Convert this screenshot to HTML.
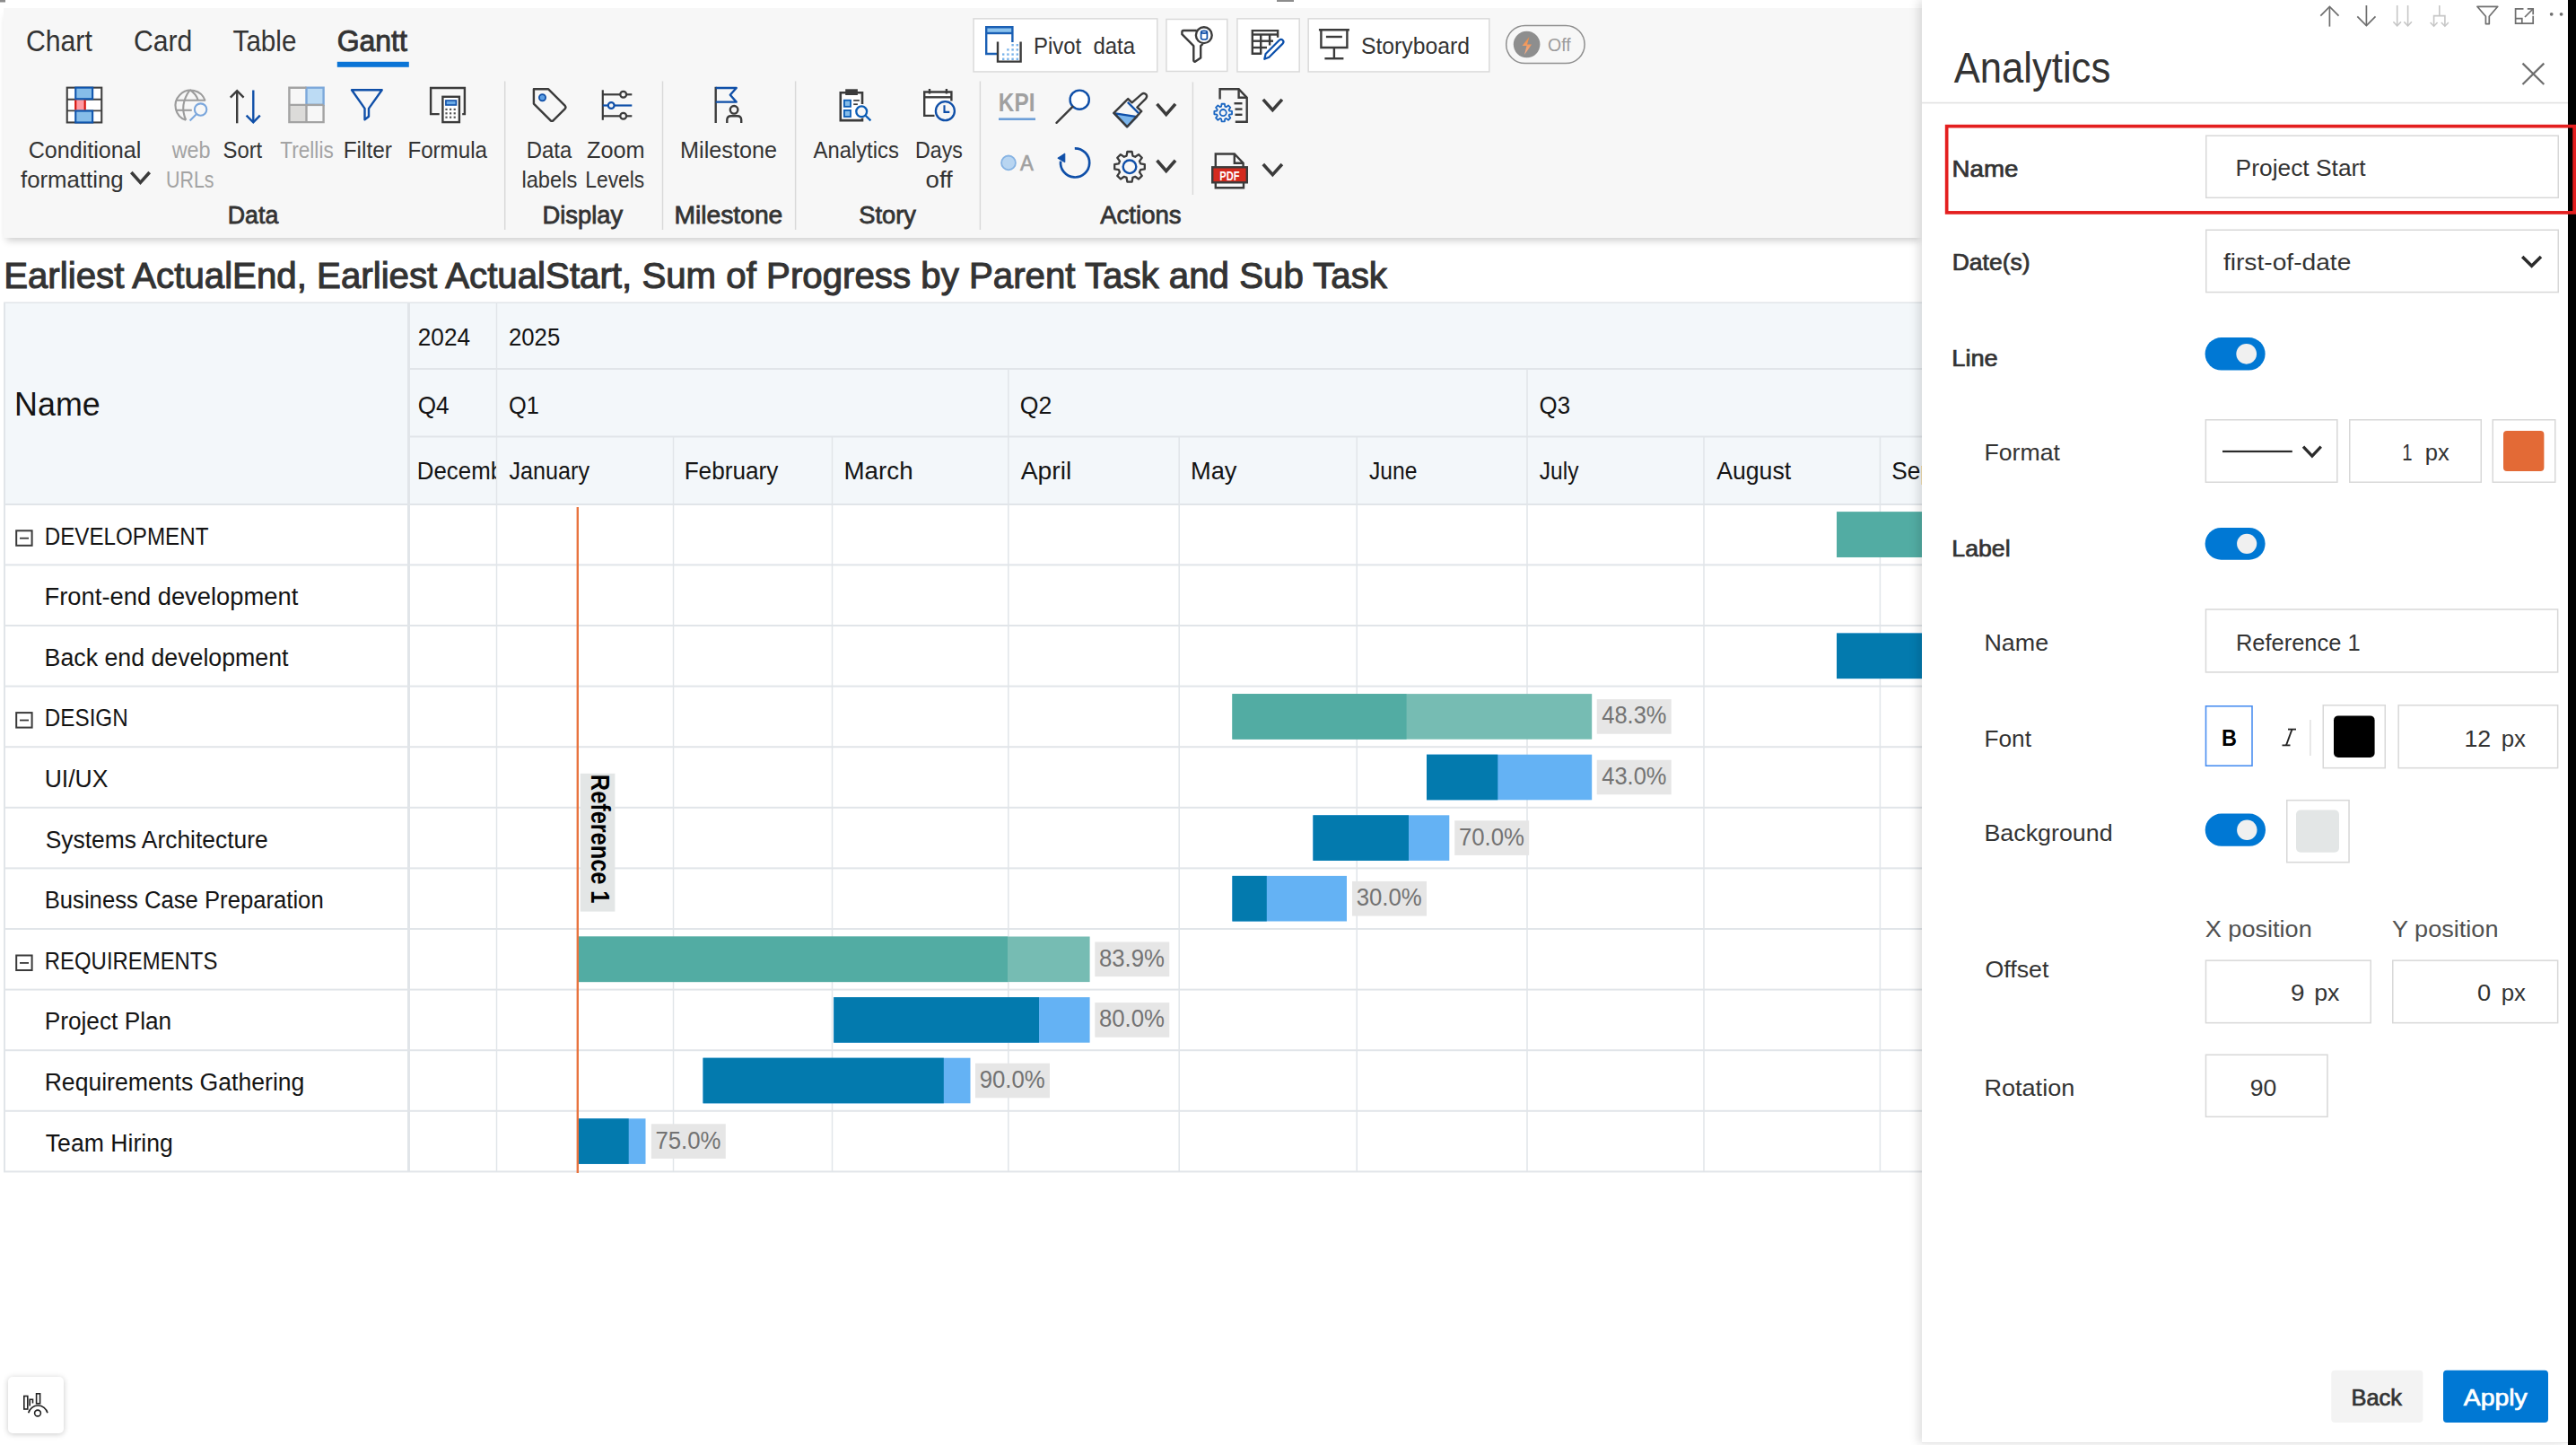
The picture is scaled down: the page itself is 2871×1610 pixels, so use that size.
<!DOCTYPE html>
<html><head><meta charset="utf-8"><title>Gantt Analytics</title>
<style>
html,body{margin:0;padding:0;background:#ffffff;width:2871px;height:1610px;overflow:hidden;font-family:"Liberation Sans",sans-serif;}
.abs{position:absolute;left:0;top:0;}
#ribbon{position:absolute;left:4px;top:9px;width:2138px;height:256px;background:#f7f7f7;box-shadow:0 6px 8px -3px rgba(0,0,0,0.2);}
#panel{position:absolute;left:2142px;top:0;width:720px;height:1607px;background:#ffffff;box-shadow:-4px 0 10px rgba(0,0,0,0.13);border-bottom:1px solid #e6e6e6;}
#strip{position:absolute;left:2862px;top:0;width:9px;height:1610px;background:#000;}
#blbtn{position:absolute;left:9px;top:1534px;width:62px;height:63px;background:#fff;border-radius:5px;box-shadow:0 1px 6px rgba(0,0,0,0.22);}
svg text{white-space:pre;}
</style></head>
<body>
<svg class="abs" width="2871" height="1610" viewBox="0 0 2871 1610">
<text x="4.14" y="320.80" font-family="Liberation Sans" font-size="40.6" font-weight="400" fill="#333333" stroke="#333333" stroke-width="1.1" textLength="1541.86" lengthAdjust="spacingAndGlyphs" xml:space="preserve">Earliest ActualEnd, Earliest ActualStart, Sum of Progress by Parent Task and Sub Task</text>
<rect x="4" y="337" width="2138" height="225" fill="#f3f7fa" />
<rect x="4" y="336.5" width="2138" height="1.5" fill="#e1e5e9" />
<rect x="4" y="337" width="2" height="968" fill="#e1e5e9" />
<rect x="454" y="337" width="3" height="968" fill="#e1e5e9" />
<rect x="457" y="410" width="1685" height="2" fill="#e1e5e9" />
<rect x="457" y="485.5" width="1685" height="2" fill="#e1e5e9" />
<rect x="4" y="561" width="2138" height="2" fill="#e1e5e9" />
<rect x="552.75" y="337" width="1.5" height="74" fill="#e1e5e9" />
<rect x="552.75" y="411" width="1.5" height="75" fill="#e1e5e9" />
<rect x="1123.05" y="411" width="1.5" height="75" fill="#e1e5e9" />
<rect x="1701.25" y="411" width="1.5" height="75" fill="#e1e5e9" />
<rect x="552.75" y="486" width="1.5" height="75" fill="#e1e5e9" />
<rect x="749.75" y="486" width="1.5" height="75" fill="#e1e5e9" />
<rect x="926.75" y="486" width="1.5" height="75" fill="#e1e5e9" />
<rect x="1123.05" y="486" width="1.5" height="75" fill="#e1e5e9" />
<rect x="1313.45" y="486" width="1.5" height="75" fill="#e1e5e9" />
<rect x="1511.45" y="486" width="1.5" height="75" fill="#e1e5e9" />
<rect x="1701.25" y="486" width="1.5" height="75" fill="#e1e5e9" />
<rect x="1898.25" y="486" width="1.5" height="75" fill="#e1e5e9" />
<rect x="2094.65" y="486" width="1.5" height="75" fill="#e1e5e9" />
<rect x="552.75" y="563" width="1.5" height="742" fill="#e1e5e9" />
<rect x="749.75" y="563" width="1.5" height="742" fill="#e1e5e9" />
<rect x="926.75" y="563" width="1.5" height="742" fill="#e1e5e9" />
<rect x="1123.05" y="563" width="1.5" height="742" fill="#e1e5e9" />
<rect x="1313.45" y="563" width="1.5" height="742" fill="#e1e5e9" />
<rect x="1511.45" y="563" width="1.5" height="742" fill="#e1e5e9" />
<rect x="1701.25" y="563" width="1.5" height="742" fill="#e1e5e9" />
<rect x="1898.25" y="563" width="1.5" height="742" fill="#e1e5e9" />
<rect x="2094.65" y="563" width="1.5" height="742" fill="#e1e5e9" />
<rect x="4" y="628.4" width="2138" height="2" fill="#e1e5e9" />
<rect x="4" y="696.0" width="2138" height="2" fill="#e1e5e9" />
<rect x="4" y="763.5999999999999" width="2138" height="2" fill="#e1e5e9" />
<rect x="4" y="831.1999999999999" width="2138" height="2" fill="#e1e5e9" />
<rect x="4" y="898.8" width="2138" height="2" fill="#e1e5e9" />
<rect x="4" y="966.3999999999999" width="2138" height="2" fill="#e1e5e9" />
<rect x="4" y="1034.0" width="2138" height="2" fill="#e1e5e9" />
<rect x="4" y="1101.6" width="2138" height="2" fill="#e1e5e9" />
<rect x="4" y="1169.1999999999998" width="2138" height="2" fill="#e1e5e9" />
<rect x="4" y="1236.8" width="2138" height="2" fill="#e1e5e9" />
<rect x="4" y="1304.3999999999999" width="2138" height="2" fill="#e1e5e9" />
<text x="16.09" y="462.90" font-family="Liberation Sans" font-size="37" font-weight="400" fill="#141414" textLength="95.64" lengthAdjust="spacingAndGlyphs" xml:space="preserve">Name</text>
<text x="465.76" y="385.00" font-family="Liberation Sans" font-size="28" font-weight="400" fill="#141414" textLength="58.27" lengthAdjust="spacingAndGlyphs" xml:space="preserve">2024</text>
<text x="566.98" y="385.00" font-family="Liberation Sans" font-size="28" font-weight="400" fill="#141414" textLength="57.24" lengthAdjust="spacingAndGlyphs" xml:space="preserve">2025</text>
<text x="465.77" y="460.80" font-family="Liberation Sans" font-size="28" font-weight="400" fill="#141414" textLength="34.87" lengthAdjust="spacingAndGlyphs" xml:space="preserve">Q4</text>
<text x="566.99" y="460.80" font-family="Liberation Sans" font-size="28" font-weight="400" fill="#141414" textLength="33.82" lengthAdjust="spacingAndGlyphs" xml:space="preserve">Q1</text>
<text x="1136.85" y="460.80" font-family="Liberation Sans" font-size="28" font-weight="400" fill="#141414" textLength="35.49" lengthAdjust="spacingAndGlyphs" xml:space="preserve">Q2</text>
<text x="1715.58" y="460.80" font-family="Liberation Sans" font-size="28" font-weight="400" fill="#141414" textLength="34.45" lengthAdjust="spacingAndGlyphs" xml:space="preserve">Q3</text>
<clipPath id="decclip"><rect x="457" y="486" width="96" height="75"/></clipPath>
<clipPath id="sepclip"><rect x="2096" y="486" width="46" height="75"/></clipPath>
<text x="567.50" y="534.30" font-family="Liberation Sans" font-size="28" font-weight="400" fill="#141414" textLength="89.50" lengthAdjust="spacingAndGlyphs" xml:space="preserve">January</text>
<text x="762.63" y="534.30" font-family="Liberation Sans" font-size="28" font-weight="400" fill="#141414" textLength="104.77" lengthAdjust="spacingAndGlyphs" xml:space="preserve">February</text>
<text x="940.52" y="534.30" font-family="Liberation Sans" font-size="28" font-weight="400" fill="#141414" textLength="77.04" lengthAdjust="spacingAndGlyphs" xml:space="preserve">March</text>
<text x="1137.80" y="534.30" font-family="Liberation Sans" font-size="28" font-weight="400" fill="#141414" textLength="56.43" lengthAdjust="spacingAndGlyphs" xml:space="preserve">April</text>
<text x="1327.05" y="534.30" font-family="Liberation Sans" font-size="28" font-weight="400" fill="#141414" textLength="51.45" lengthAdjust="spacingAndGlyphs" xml:space="preserve">May</text>
<text x="1526.00" y="534.30" font-family="Liberation Sans" font-size="28" font-weight="400" fill="#141414" textLength="53.40" lengthAdjust="spacingAndGlyphs" xml:space="preserve">June</text>
<text x="1715.80" y="534.30" font-family="Liberation Sans" font-size="28" font-weight="400" fill="#141414" textLength="43.60" lengthAdjust="spacingAndGlyphs" xml:space="preserve">July</text>
<text x="1913.20" y="534.30" font-family="Liberation Sans" font-size="28" font-weight="400" fill="#141414" textLength="82.99" lengthAdjust="spacingAndGlyphs" xml:space="preserve">August</text>
<g clip-path="url(#decclip)">
<text x="464.86" y="534.30" font-family="Liberation Sans" font-size="28" font-weight="400" fill="#141414" textLength="119.14" lengthAdjust="spacingAndGlyphs" xml:space="preserve">December</text>
</g>
<g clip-path="url(#sepclip)">
<text x="2108.26" y="534.30" font-family="Liberation Sans" font-size="28" font-weight="400" fill="#141414" textLength="128.24" lengthAdjust="spacingAndGlyphs" xml:space="preserve">September</text>
</g>
<text x="49.81" y="606.60" font-family="Liberation Sans" font-size="27" font-weight="400" fill="#141414" textLength="182.63" lengthAdjust="spacingAndGlyphs" xml:space="preserve">DEVELOPMENT</text>
<rect x="18.2" y="591.30" width="17.4" height="16.5" fill="none" stroke="#3a3a3a" stroke-width="2"/><rect x="22" y="598.80" width="10" height="1.8" fill="#3a3a3a"/>
<text x="49.57" y="674.20" font-family="Liberation Sans" font-size="27" font-weight="400" fill="#141414" textLength="282.72" lengthAdjust="spacingAndGlyphs" xml:space="preserve">Front-end development</text>
<text x="49.62" y="741.80" font-family="Liberation Sans" font-size="27" font-weight="400" fill="#141414" textLength="271.89" lengthAdjust="spacingAndGlyphs" xml:space="preserve">Back end development</text>
<text x="49.80" y="809.40" font-family="Liberation Sans" font-size="27" font-weight="400" fill="#141414" textLength="92.94" lengthAdjust="spacingAndGlyphs" xml:space="preserve">DESIGN</text>
<rect x="18.2" y="794.10" width="17.4" height="16.5" fill="none" stroke="#3a3a3a" stroke-width="2"/><rect x="22" y="801.60" width="10" height="1.8" fill="#3a3a3a"/>
<text x="49.63" y="877.00" font-family="Liberation Sans" font-size="27" font-weight="400" fill="#141414" textLength="70.77" lengthAdjust="spacingAndGlyphs" xml:space="preserve">UI/UX</text>
<text x="50.63" y="944.60" font-family="Liberation Sans" font-size="27" font-weight="400" fill="#141414" textLength="248.06" lengthAdjust="spacingAndGlyphs" xml:space="preserve">Systems Architecture</text>
<text x="49.70" y="1012.20" font-family="Liberation Sans" font-size="27" font-weight="400" fill="#141414" textLength="310.97" lengthAdjust="spacingAndGlyphs" xml:space="preserve">Business Case Preparation</text>
<text x="49.83" y="1079.80" font-family="Liberation Sans" font-size="27" font-weight="400" fill="#141414" textLength="192.56" lengthAdjust="spacingAndGlyphs" xml:space="preserve">REQUIREMENTS</text>
<rect x="18.2" y="1064.50" width="17.4" height="16.5" fill="none" stroke="#3a3a3a" stroke-width="2"/><rect x="22" y="1072.00" width="10" height="1.8" fill="#3a3a3a"/>
<text x="49.66" y="1147.40" font-family="Liberation Sans" font-size="27" font-weight="400" fill="#141414" textLength="141.53" lengthAdjust="spacingAndGlyphs" xml:space="preserve">Project Plan</text>
<text x="49.63" y="1215.00" font-family="Liberation Sans" font-size="27" font-weight="400" fill="#141414" textLength="289.77" lengthAdjust="spacingAndGlyphs" xml:space="preserve">Requirements Gathering</text>
<text x="50.80" y="1282.60" font-family="Liberation Sans" font-size="27" font-weight="400" fill="#141414" textLength="142.00" lengthAdjust="spacingAndGlyphs" xml:space="preserve">Team Hiring</text>
<rect x="2047.00" y="570.30" width="95.00" height="50.6" fill="#76bcb3" />
<rect x="2047.00" y="570.30" width="95.00" height="50.6" fill="#52aca3" />
<rect x="2047.00" y="705.50" width="95.00" height="50.6" fill="#64b2f4" />
<rect x="2047.00" y="705.50" width="95.00" height="50.6" fill="#037aae" />
<rect x="1373.40" y="773.10" width="400.80" height="50.6" fill="#76bcb3" />
<rect x="1373.40" y="773.10" width="194.20" height="50.6" fill="#52aca3" />
<rect x="1779.70" y="779.10" width="83" height="38.6" fill="#e6e6e6" />
<text x="1785.30" y="806.40" font-family="Liberation Sans" font-size="28" font-weight="400" fill="#737373" textLength="72.11" lengthAdjust="spacingAndGlyphs" xml:space="preserve">48.3%</text>
<rect x="1590.00" y="840.70" width="184.20" height="50.6" fill="#64b2f4" />
<rect x="1590.00" y="840.70" width="79.30" height="50.6" fill="#037aae" />
<rect x="1779.70" y="846.70" width="83" height="38.6" fill="#e6e6e6" />
<text x="1785.30" y="874.00" font-family="Liberation Sans" font-size="28" font-weight="400" fill="#737373" textLength="72.11" lengthAdjust="spacingAndGlyphs" xml:space="preserve">43.0%</text>
<rect x="1463.40" y="908.30" width="151.90" height="50.6" fill="#64b2f4" />
<rect x="1463.40" y="908.30" width="106.60" height="50.6" fill="#037aae" />
<rect x="1621.20" y="914.30" width="83" height="38.6" fill="#e6e6e6" />
<text x="1625.88" y="941.60" font-family="Liberation Sans" font-size="28" font-weight="400" fill="#737373" textLength="73.04" lengthAdjust="spacingAndGlyphs" xml:space="preserve">70.0%</text>
<rect x="1373.40" y="975.90" width="127.60" height="50.6" fill="#64b2f4" />
<rect x="1373.40" y="975.90" width="38.40" height="50.6" fill="#037aae" />
<rect x="1507.00" y="981.90" width="83" height="38.6" fill="#e6e6e6" />
<text x="1511.68" y="1009.20" font-family="Liberation Sans" font-size="28" font-weight="400" fill="#737373" textLength="73.04" lengthAdjust="spacingAndGlyphs" xml:space="preserve">30.0%</text>
<rect x="643.40" y="1043.50" width="571.20" height="50.6" fill="#76bcb3" />
<rect x="643.40" y="1043.50" width="479.60" height="50.6" fill="#52aca3" />
<rect x="1220.30" y="1049.50" width="83" height="38.6" fill="#e6e6e6" />
<text x="1224.98" y="1076.80" font-family="Liberation Sans" font-size="28" font-weight="400" fill="#737373" textLength="73.04" lengthAdjust="spacingAndGlyphs" xml:space="preserve">83.9%</text>
<rect x="929.20" y="1111.10" width="285.40" height="50.6" fill="#64b2f4" />
<rect x="929.20" y="1111.10" width="228.80" height="50.6" fill="#037aae" />
<rect x="1220.30" y="1117.10" width="83" height="38.6" fill="#e6e6e6" />
<text x="1224.98" y="1144.40" font-family="Liberation Sans" font-size="28" font-weight="400" fill="#737373" textLength="73.04" lengthAdjust="spacingAndGlyphs" xml:space="preserve">80.0%</text>
<rect x="783.50" y="1178.70" width="298.00" height="50.6" fill="#64b2f4" />
<rect x="783.50" y="1178.70" width="268.30" height="50.6" fill="#037aae" />
<rect x="1087.00" y="1184.70" width="83" height="38.6" fill="#e6e6e6" />
<text x="1091.68" y="1212.00" font-family="Liberation Sans" font-size="28" font-weight="400" fill="#737373" textLength="73.04" lengthAdjust="spacingAndGlyphs" xml:space="preserve">90.0%</text>
<rect x="643.40" y="1246.30" width="76.10" height="50.6" fill="#64b2f4" />
<rect x="643.40" y="1246.30" width="57.30" height="50.6" fill="#037aae" />
<rect x="725.80" y="1252.30" width="83" height="38.6" fill="#e6e6e6" />
<text x="730.48" y="1279.60" font-family="Liberation Sans" font-size="28" font-weight="400" fill="#737373" textLength="73.04" lengthAdjust="spacingAndGlyphs" xml:space="preserve">75.0%</text>
<rect x="642.6" y="565" width="2.4" height="742" fill="#e8743f" />
<rect x="646.8" y="861.8" width="38.6" height="153.8" fill="#e3e6e6" />
<text transform="translate(658.60,863.70) rotate(90)" x="-0.87" y="0" font-family="Liberation Sans" font-size="29" font-weight="700" fill="#000" textLength="143.59" lengthAdjust="spacingAndGlyphs" xml:space="preserve">Reference 1</text>
</svg>
<div id="blbtn"></div>
<svg class="abs" width="2871" height="1610" viewBox="0 0 2871 1610">
<svg x="26" y="1552" width="28" height="27" viewBox="0 0 28 27" overflow="visible"><g fill="none" stroke="#222" stroke-width="1.6"><rect x="0.8" y="3.5" width="4" height="14.5"/><path d="M7.2 14.5 V7.3 H10.5 V11.5"/><rect x="14.6" y="0.8" width="4" height="11"/><path d="M5.7 22.3 A11 11 0 0 1 27 22.3"/><circle cx="16" cy="22.5" r="3.4"/></g></svg>
</svg>
<div id="ribbon"></div>
<svg class="abs" width="2871" height="1610" viewBox="0 0 2871 1610">
<rect x="0" y="0" width="6" height="2.5" fill="#8c8c8c" />
<rect x="1423" y="0" width="19" height="2" fill="#8c8c8c" />
<text x="29.01" y="57.20" font-family="Liberation Sans" font-size="34" font-weight="400" fill="#333333" textLength="73.80" lengthAdjust="spacingAndGlyphs" xml:space="preserve">Chart</text>
<text x="148.91" y="57.20" font-family="Liberation Sans" font-size="34" font-weight="400" fill="#333333" textLength="65.28" lengthAdjust="spacingAndGlyphs" xml:space="preserve">Card</text>
<text x="259.60" y="57.20" font-family="Liberation Sans" font-size="34" font-weight="400" fill="#333333" textLength="70.79" lengthAdjust="spacingAndGlyphs" xml:space="preserve">Table</text>
<text x="375.66" y="57.20" font-family="Liberation Sans" font-size="34" font-weight="400" fill="#333333" stroke="#333333" stroke-width="0.95" textLength="78.22" lengthAdjust="spacingAndGlyphs" xml:space="preserve">Gantt</text>
<rect x="375.8" y="68.8" width="80" height="6" fill="#0a74d6" />
<text x="31.65" y="176.10" font-family="Liberation Sans" font-size="26.5" font-weight="400" fill="#333333" textLength="125.69" lengthAdjust="spacingAndGlyphs" xml:space="preserve">Conditional</text>
<text x="23.00" y="208.60" font-family="Liberation Sans" font-size="26.5" font-weight="400" fill="#333333" textLength="114.72" lengthAdjust="spacingAndGlyphs" xml:space="preserve">formatting</text>
<text x="191.68" y="176.10" font-family="Liberation Sans" font-size="26.5" font-weight="400" fill="#a3a3a3" textLength="42.97" lengthAdjust="spacingAndGlyphs" xml:space="preserve">web</text>
<text x="184.98" y="208.60" font-family="Liberation Sans" font-size="26.5" font-weight="400" fill="#a3a3a3" textLength="53.52" lengthAdjust="spacingAndGlyphs" xml:space="preserve">URLs</text>
<text x="248.50" y="176.10" font-family="Liberation Sans" font-size="26.5" font-weight="400" fill="#333333" textLength="43.73" lengthAdjust="spacingAndGlyphs" xml:space="preserve">Sort</text>
<text x="312.30" y="176.10" font-family="Liberation Sans" font-size="26.5" font-weight="400" fill="#a3a3a3" textLength="59.41" lengthAdjust="spacingAndGlyphs" xml:space="preserve">Trellis</text>
<text x="382.66" y="176.10" font-family="Liberation Sans" font-size="26.5" font-weight="400" fill="#333333" textLength="54.18" lengthAdjust="spacingAndGlyphs" xml:space="preserve">Filter</text>
<text x="454.38" y="176.10" font-family="Liberation Sans" font-size="26.5" font-weight="400" fill="#333333" textLength="88.58" lengthAdjust="spacingAndGlyphs" xml:space="preserve">Formula</text>
<text x="586.80" y="176.10" font-family="Liberation Sans" font-size="26.5" font-weight="400" fill="#333333" textLength="50.47" lengthAdjust="spacingAndGlyphs" xml:space="preserve">Data</text>
<text x="581.41" y="208.60" font-family="Liberation Sans" font-size="26.5" font-weight="400" fill="#333333" textLength="61.82" lengthAdjust="spacingAndGlyphs" xml:space="preserve">labels</text>
<text x="654.00" y="176.10" font-family="Liberation Sans" font-size="26.5" font-weight="400" fill="#333333" textLength="64.63" lengthAdjust="spacingAndGlyphs" xml:space="preserve">Zoom</text>
<text x="652.28" y="208.60" font-family="Liberation Sans" font-size="26.5" font-weight="400" fill="#333333" textLength="65.94" lengthAdjust="spacingAndGlyphs" xml:space="preserve">Levels</text>
<text x="758.10" y="176.10" font-family="Liberation Sans" font-size="26.5" font-weight="400" fill="#333333" textLength="107.91" lengthAdjust="spacingAndGlyphs" xml:space="preserve">Milestone</text>
<text x="906.60" y="176.10" font-family="Liberation Sans" font-size="26.5" font-weight="400" fill="#333333" textLength="95.22" lengthAdjust="spacingAndGlyphs" xml:space="preserve">Analytics</text>
<text x="1020.05" y="176.10" font-family="Liberation Sans" font-size="26.5" font-weight="400" fill="#333333" textLength="52.77" lengthAdjust="spacingAndGlyphs" xml:space="preserve">Days</text>
<text x="1031.56" y="208.60" font-family="Liberation Sans" font-size="26.5" font-weight="400" fill="#333333" textLength="30.18" lengthAdjust="spacingAndGlyphs" xml:space="preserve">off</text>
<text x="253.75" y="248.70" font-family="Liberation Sans" font-size="27.5" font-weight="400" fill="#333333" stroke="#333333" stroke-width="0.77" textLength="56.56" lengthAdjust="spacingAndGlyphs" xml:space="preserve">Data</text>
<text x="604.51" y="248.70" font-family="Liberation Sans" font-size="27.5" font-weight="400" fill="#333333" stroke="#333333" stroke-width="0.77" textLength="89.74" lengthAdjust="spacingAndGlyphs" xml:space="preserve">Display</text>
<text x="751.45" y="248.70" font-family="Liberation Sans" font-size="27.5" font-weight="400" fill="#333333" stroke="#333333" stroke-width="0.77" textLength="120.86" lengthAdjust="spacingAndGlyphs" xml:space="preserve">Milestone</text>
<text x="957.31" y="248.70" font-family="Liberation Sans" font-size="27.5" font-weight="400" fill="#333333" stroke="#333333" stroke-width="0.77" textLength="63.54" lengthAdjust="spacingAndGlyphs" xml:space="preserve">Story</text>
<text x="1226.20" y="248.70" font-family="Liberation Sans" font-size="27.5" font-weight="400" fill="#333333" stroke="#333333" stroke-width="0.77" textLength="90.45" lengthAdjust="spacingAndGlyphs" xml:space="preserve">Actions</text>
<rect x="561.95" y="90.5" width="1.5" height="165.5" fill="#d9d9d9" />
<rect x="737.75" y="90.5" width="1.5" height="165.5" fill="#d9d9d9" />
<rect x="885.85" y="90.5" width="1.5" height="165.5" fill="#d9d9d9" />
<rect x="1091.65" y="90.5" width="1.5" height="165.5" fill="#d9d9d9" />
<rect x="1328.65" y="91.5" width="1.5" height="125.5" fill="#d9d9d9" />
<rect x="74.75" y="97.65" width="38.5" height="38.8" fill="#ffffff" stroke="#404040" stroke-width="2.1"/><line x1="74.75" y1="110.8" x2="113.25" y2="110.8" stroke="#404040" stroke-width="1.9"/><line x1="74.75" y1="123.4" x2="113.25" y2="123.4" stroke="#404040" stroke-width="1.9"/><rect x="83.2" y="111.3" width="12.5" height="11.2" fill="#ff9aa2"/><line x1="84.25" y1="111.3" x2="84.25" y2="122.5" stroke="#d4140c" stroke-width="2.1"/><line x1="94.65" y1="111.3" x2="94.65" y2="122.5" stroke="#d4140c" stroke-width="2.1"/><rect x="84.25" y="97.65" width="18.9" height="12.6" fill="#86bde9" stroke="#0f55ad" stroke-width="2.1"/><rect x="84.25" y="123.55" width="18.9" height="12.9" fill="#86bde9" stroke="#0f55ad" stroke-width="2.1"/>
<polyline points="146.30,192.00 156.50,203.40 166.70,192.00" fill="none" stroke="#3b3b3b" stroke-width="3.6" stroke-linejoin="miter"/>
<g fill="none" stroke="#9c9c9c" stroke-width="2.1"><path d="M207.2 133.8 A17 17 0 1 1 228.6 112.2"/><path d="M211.7 100.2 Q199.5 117 207.2 133.8"/><path d="M211.7 100.2 Q218.8 105 220.6 111.5"/><line x1="196.6" y1="111.7" x2="229" y2="111.7"/><line x1="196.6" y1="122.8" x2="213.8" y2="122.8"/></g><g fill="none" stroke="#7aa6dc" stroke-width="2.1"><circle cx="223.6" cy="122.1" r="6.7"/><line x1="218.6" y1="127.4" x2="211.6" y2="134.4"/></g>
<svg x="256" y="100" width="34.4" height="37.3" viewBox="0 0 34.4 37.3" overflow="visible"><g fill="none" stroke="#3b3b3b" stroke-width="2.4"><line x1="8.2" y1="1" x2="8.2" y2="37.3"/><polyline points="0.8,8.6 8.2,1.2 15.6,8.6"/></g><g fill="none" stroke="#0f4fa8" stroke-width="2.4"><line x1="26.3" y1="0.5" x2="26.3" y2="36"/><polyline points="18.6,28.6 26.3,36.3 33.8,28.6"/></g></svg>
<svg x="321.2" y="96.5" width="40.6" height="40.8" viewBox="0 0 40.6 40.8" overflow="visible"><rect x="1.2" y="20.4" width="19" height="19.2" fill="#dcdbd9"/><rect x="20.3" y="1.2" width="19.1" height="19.2" fill="#bcdbf4" stroke="#7ca8da" stroke-width="2.4"/><g fill="none" stroke="#a3a3a3" stroke-width="2.4"><path d="M20.3 1.2 H1.2 V39.6 H39.4 V20.4"/><line x1="1.2" y1="20.4" x2="39.4" y2="20.4"/><line x1="20.3" y1="20.4" x2="20.3" y2="39.6"/></g></svg>
<svg x="390.8" y="98.9" width="36.1" height="35.9" viewBox="0 0 36.1 35.9" overflow="visible"><path d="M1.2 1.4 H34.9 L20.2 22 V30.8 L15.7 34.3 V22 Z" fill="none" stroke="#0f4fa8" stroke-width="2.4" stroke-linejoin="round"/></svg>
<svg x="478.9" y="96.8" width="40.2" height="40.5" viewBox="0 0 40.2 40.5" overflow="visible"><g fill="none" stroke="#3b3b3b" stroke-width="2.4"><path d="M10.8 30.3 H1.2 V1.2 H39 V30.3 H36.3"/><rect x="14.5" y="11" width="18.5" height="28.3" fill="#ffffff"/></g><rect x="18" y="15.2" width="11.5" height="5" fill="#6aaae6" stroke="#0f4fa8" stroke-width="1.6"/><g fill="#555"><rect x="17.5" y="24.0" width="2.2" height="2.2"/><rect x="17.5" y="28.4" width="2.2" height="2.2"/><rect x="17.5" y="32.8" width="2.2" height="2.2"/><rect x="22.1" y="24.0" width="2.2" height="2.2"/><rect x="22.1" y="28.4" width="2.2" height="2.2"/><rect x="22.1" y="32.8" width="2.2" height="2.2"/><rect x="26.7" y="24.0" width="2.2" height="2.2"/><rect x="26.7" y="28.4" width="2.2" height="2.2"/><rect x="26.7" y="32.8" width="2.2" height="2.2"/></g></svg>
<svg x="593.5" y="97.9" width="38.5" height="38" viewBox="0 0 38.5 38" overflow="visible"><path d="M1.4 1.4 H17.7 L36.3 20 Q37.6 21.6 36.3 23.2 L23.2 36.3 Q21.6 37.6 20 36.3 L1.4 17.7 Z" fill="none" stroke="#3b3b3b" stroke-width="2.4" stroke-linejoin="round"/><circle cx="11" cy="10.9" r="3.6" fill="#5d9fe4" stroke="#0f4fa8" stroke-width="1.8"/></svg>
<svg x="670.7" y="100.3" width="33.6" height="33.5" viewBox="0 0 33.6 33.5" overflow="visible"><g fill="none" stroke="#3b3b3b" stroke-width="2.2"><line x1="1.1" y1="0" x2="1.1" y2="33.5"/><line x1="1.1" y1="5" x2="20.5" y2="5"/><line x1="27.5" y1="5" x2="33.6" y2="5"/><circle cx="24" cy="5" r="3.4"/><line x1="1.1" y1="29" x2="20.5" y2="29"/><line x1="27.5" y1="29" x2="33.6" y2="29"/><circle cx="24" cy="29" r="3.4"/></g><g fill="none" stroke="#0f4fa8" stroke-width="2.2"><line x1="1.1" y1="17.2" x2="7" y2="17.2"/><line x1="14" y1="17.2" x2="33.6" y2="17.2"/><circle cx="10.5" cy="17.2" r="3.4"/></g></svg>
<svg x="796.5" y="96.8" width="32.2" height="40.2" viewBox="0 0 32.2 40.2" overflow="visible"><line x1="1.2" y1="0" x2="1.2" y2="40.2" stroke="#3b3b3b" stroke-width="2.4"/><path d="M1.2 1.2 H24.2 L17.3 9 L24.2 16.8 H1.2" fill="none" stroke="#0f4fa8" stroke-width="2.4" stroke-linejoin="round"/><g fill="none" stroke="#3b3b3b" stroke-width="2.4"><circle cx="21.6" cy="25.5" r="4.3"/><path d="M13.8 40.2 V36.8 Q13.8 32.4 18.3 32.4 H25.2 Q29.7 32.4 29.7 36.8 V40.2"/></g></svg>
<rect x="936.8" y="103.2" width="24.2" height="30.9" fill="#ffffff"/><g fill="none" stroke="#3b3b3b" stroke-width="2.6"><path d="M943 103.2 H936.8 V134.1 H961 V131"/><path d="M955 103.2 H961 V116"/></g><rect x="942.2" y="99.3" width="13.7" height="6.7" fill="#3b3b3b"/><rect x="940.9" y="111.7" width="7.1" height="7.1" fill="#86bde9" stroke="#0a5cb5" stroke-width="1.8"/><rect x="940.9" y="122.9" width="7.1" height="7.1" fill="#86bde9" stroke="#0a5cb5" stroke-width="1.8"/><g stroke="#3b3b3b" stroke-width="1.7"><line x1="951.2" y1="111.9" x2="957.9" y2="111.9"/><line x1="951.2" y1="116.2" x2="955.9" y2="116.2"/></g><circle cx="960.2" cy="124.3" r="7.4" fill="#f7f7f7"/><g fill="none" stroke="#0a5cb5" stroke-width="2.3"><circle cx="960.2" cy="124.3" r="5.9"/><line x1="964.4" y1="128.5" x2="970.4" y2="134.4"/></g>
<rect x="1030.2" y="102.5" width="30.2" height="26.4" fill="#ffffff"/><g fill="none" stroke="#3b3b3b" stroke-width="2.4"><path d="M1041.5 128.9 H1030.2 V102.5 H1060.4 V112.4"/><line x1="1030.2" y1="108.3" x2="1060.4" y2="108.3"/><line x1="1036" y1="99" x2="1036" y2="104.5"/><line x1="1054.9" y1="99" x2="1054.9" y2="104.5"/></g><circle cx="1053.4" cy="123.7" r="12.2" fill="#f7f7f7"/><circle cx="1053.4" cy="123.7" r="10.5" fill="none" stroke="#0f4fa8" stroke-width="2.3"/><polyline points="1052.5,117.3 1052.5,124.9 1058.3,124.9" fill="none" stroke="#0f4fa8" stroke-width="2.1"/>
<text x="1112.86" y="123.90" font-family="Liberation Sans" font-size="29" font-weight="700" fill="#a0a0a0" textLength="40.52" lengthAdjust="spacingAndGlyphs" xml:space="preserve">KPI</text>
<rect x="1113" y="131.4" width="41" height="2.6" fill="#6d9fd8" />
<svg x="1176.3" y="99.3" width="39.1" height="38.7" viewBox="0 0 39.1 38.7" overflow="visible"><circle cx="26.9" cy="11.9" r="10.6" fill="#ffffff" stroke="#0f4fa8" stroke-width="2.4"/><line x1="19.2" y1="19.6" x2="1.2" y2="37.5" stroke="#3b3b3b" stroke-width="2.4" stroke-linecap="round"/></svg>
<svg x="1240.6" y="103.7" width="38" height="38.6" viewBox="0 0 38 38.6" overflow="visible"><path d="M0.8 22.4 L26.6 26.4 L15.6 37.6 Z" fill="#7ab4ea" stroke="#0f4fa8" stroke-width="2.2" stroke-linejoin="round"/><path d="M0.8 22.2 L16.6 6.4 L21 10.6 L31.6 1.4 Q34.4 -0.8 36.6 1.4 Q38.6 3.8 36.2 6.4 L26.8 15.8 L31.6 20.2 L15.6 37.6 Z" fill="none" stroke="#3b3b3b" stroke-width="2.4" stroke-linejoin="round"/><line x1="16.2" y1="10.2" x2="28.4" y2="22.4" stroke="#0f4fa8" stroke-width="2.2"/></svg>
<polyline points="1289.50,115.90 1299.75,127.60 1310.00,115.90" fill="none" stroke="#3b3b3b" stroke-width="3.6" stroke-linejoin="miter"/>
<svg x="1114.8" y="172.2" width="37" height="18.2" viewBox="0 0 37 18.2" overflow="visible"><circle cx="9.2" cy="9.2" r="7.9" fill="#b8d5f1" stroke="#86b3e3" stroke-width="1.8"/></svg>
<text x="1136.90" y="189.70" font-family="Liberation Sans" font-size="24" font-weight="400" fill="#a0a0a0" stroke="#a0a0a0" stroke-width="0.67" textLength="14.81" lengthAdjust="spacingAndGlyphs" xml:space="preserve">A</text>
<path d="M1197.8 165.3 A16.1 16.1 0 1 1 1182.1 179.6" fill="none" stroke="#0f4fa8" stroke-width="2.7"/><path d="M1178.8 176.2 L1186.8 171 L1186.8 180.8 Z" fill="#0f4fa8" stroke="#0f4fa8" stroke-width="1" stroke-linejoin="round"/>
<svg x="1241" y="167.8" width="36" height="36" viewBox="0 0 36 36" overflow="visible"><path d="M30.13,14.58 L34.80,15.39 L34.80,20.61 L30.13,21.42 L28.99,24.16 L31.72,28.04 L28.04,31.72 L24.16,28.99 L21.42,30.13 L20.61,34.80 L15.39,34.80 L14.58,30.13 L11.84,28.99 L7.96,31.72 L4.28,28.04 L7.01,24.16 L5.87,21.42 L1.20,20.61 L1.20,15.39 L5.87,14.58 L7.01,11.84 L4.28,7.96 L7.96,4.28 L11.84,7.01 L14.58,5.87 L15.39,1.20 L20.61,1.20 L21.42,5.87 L24.16,7.01 L28.04,4.28 L31.72,7.96 L28.99,11.84 Z" fill="none" stroke="#3b3b3b" stroke-width="2.3" stroke-linejoin="round"/><circle cx="18" cy="18" r="7.3" fill="none" stroke="#0f4fa8" stroke-width="2.4"/></svg>
<polyline points="1289.50,178.80 1299.75,190.50 1310.00,178.80" fill="none" stroke="#3b3b3b" stroke-width="3.6" stroke-linejoin="miter"/>
<svg x="1352" y="98" width="38.9" height="39" viewBox="0 0 38.9 39" overflow="visible"><g fill="none" stroke="#3b3b3b" stroke-width="2.4"><path d="M7.6 12.5 V1.2 H28.6 L37.7 10.8 V37.8 H24.8"/><path d="M28.6 1.2 V10.8 H37.7"/><line x1="23.5" y1="17.2" x2="32.5" y2="17.2"/><line x1="24.5" y1="23.6" x2="32.5" y2="23.6"/><line x1="24.5" y1="29.8" x2="32.5" y2="29.8"/></g><path d="M18.09,25.51 L21.06,25.96 L21.06,29.24 L18.09,29.69 L17.55,30.99 L19.34,33.41 L17.01,35.74 L14.59,33.95 L13.29,34.49 L12.84,37.46 L9.56,37.46 L9.11,34.49 L7.81,33.95 L5.39,35.74 L3.06,33.41 L4.85,30.99 L4.31,29.69 L1.34,29.24 L1.34,25.96 L4.31,25.51 L4.85,24.21 L3.06,21.79 L5.39,19.46 L7.81,21.25 L9.11,20.71 L9.56,17.74 L12.84,17.74 L13.29,20.71 L14.59,21.25 L17.01,19.46 L19.34,21.79 L17.55,24.21 Z" fill="#f7f7f7" stroke="#1a66c2" stroke-width="1.8" stroke-linejoin="round"/><circle cx="11.2" cy="27.6" r="3.6" fill="none" stroke="#1a66c2" stroke-width="1.8"/></svg>
<polyline points="1407.80,110.90 1418.35,122.60 1428.90,110.90" fill="none" stroke="#3b3b3b" stroke-width="3.6" stroke-linejoin="miter"/>
<svg x="1350" y="170.3" width="41" height="40.2" viewBox="0 0 41 40.2" overflow="visible"><g fill="none" stroke="#3b3b3b" stroke-width="2.4"><path d="M4.8 16 V1.2 H25.8 L35.6 11.4 V16"/><path d="M25.8 1.2 V11.4 H35.6"/><path d="M4.8 33 V39 H36 V33"/></g><rect x="1.2" y="16" width="38.6" height="17" fill="#d32a1e" stroke="#3b3b3b" stroke-width="2.4"/></svg>
<text x="1359.30" y="200.80" font-family="Liberation Sans" font-size="14" font-weight="700" fill="#ffffff" textLength="22.15" lengthAdjust="spacingAndGlyphs" xml:space="preserve">PDF</text>
<polyline points="1407.80,183.00 1418.35,194.60 1428.90,183.00" fill="none" stroke="#3b3b3b" stroke-width="3.6" stroke-linejoin="miter"/>
<rect x="1085.05" y="20.85" width="204.70" height="59.10" fill="#ffffff" stroke="#dadada" stroke-width="1.5"/>
<rect x="1299.95" y="21.45" width="67.80" height="58.00" fill="#ffffff" stroke="#dadada" stroke-width="1.5"/>
<rect x="1378.95" y="20.85" width="69.20" height="59.10" fill="#ffffff" stroke="#dadada" stroke-width="1.5"/>
<rect x="1458.15" y="20.85" width="201.70" height="59.10" fill="#ffffff" stroke="#dadada" stroke-width="1.5"/>
<svg x="1098" y="29" width="40.8" height="40.8" viewBox="0 0 40.8 40.8" overflow="visible"><rect x="1.2" y="1.2" width="29.2" height="6.8" fill="#8cc3ee"/><path d="M13.5 31 H1.2 V1.2 H30.4 V18" fill="none" stroke="#1a5fb4" stroke-width="2.4"/><line x1="1.2" y1="8" x2="30.4" y2="8" stroke="#1a5fb4" stroke-width="2.4"/><path d="M14 17.5 V39.6 H39.6 V17.5" fill="none" stroke="#3b3b3b" stroke-width="2.4"/><g fill="#79b3ea"><rect x="19.0" y="30.4" width="2.4" height="2.4"/><rect x="19.0" y="35.6" width="2.4" height="2.4"/><rect x="24.2" y="25.2" width="2.4" height="2.4"/><rect x="24.2" y="30.4" width="2.4" height="2.4"/><rect x="24.2" y="35.6" width="2.4" height="2.4"/><rect x="29.4" y="20.0" width="2.4" height="2.4"/><rect x="29.4" y="25.2" width="2.4" height="2.4"/><rect x="29.4" y="30.4" width="2.4" height="2.4"/><rect x="29.4" y="35.6" width="2.4" height="2.4"/><rect x="34.6" y="20.0" width="2.4" height="2.4"/><rect x="34.6" y="25.2" width="2.4" height="2.4"/><rect x="34.6" y="30.4" width="2.4" height="2.4"/><rect x="34.6" y="35.6" width="2.4" height="2.4"/></g></svg>
<text x="1152.10" y="60.00" font-family="Liberation Sans" font-size="26.5" font-weight="400" fill="#333333" textLength="112.97" lengthAdjust="spacingAndGlyphs" xml:space="preserve">Pivot  data</text>
<path d="M1333.8 34 H1319 Q1317.4 34 1317.4 35.8 V38.2 L1330.3 51.2 V67.4 Q1330.6 69.2 1332.2 68.6 L1338.2 64.4 V51.2 L1340.6 48.9" fill="none" stroke="#3b3b3b" stroke-width="2.4" stroke-linejoin="round"/><circle cx="1341.8" cy="39.2" r="8.9" fill="#ffffff" stroke="#3b3b3b" stroke-width="2.4"/><path d="M1338.6 36 Q1338.6 34.4 1342 34.4 Q1345.4 34.4 1345.4 36 V42.4 Q1345.4 44 1342 44 Q1338.6 44 1338.6 42.4 Z M1338.6 36.2 Q1342 38.2 1345.4 36.2" fill="none" stroke="#0f4fa8" stroke-width="1.7"/>
<g fill="none" stroke="#3b3b3b" stroke-width="2.4"><path d="M1406.2 59.7 H1395.8 V34.1 H1424.1 V41.8"/><line x1="1395.8" y1="38.5" x2="1424.1" y2="38.5"/><line x1="1395.8" y1="45.7" x2="1419" y2="45.7"/><line x1="1395.8" y1="53" x2="1412" y2="53"/><line x1="1405.2" y1="38.5" x2="1405.2" y2="59.7"/><line x1="1415.1" y1="38.5" x2="1415.1" y2="50.5"/></g><path d="M1409.3 65.8 L1410.6 60 L1425.8 44.8 Q1427.8 43 1429.6 44.8 Q1431.4 46.6 1429.6 48.6 L1414.4 63.8 Z" fill="#ffffff" stroke="#0a4fab" stroke-width="2.2" stroke-linejoin="round"/>
<svg x="1469.9" y="32" width="34" height="34.4" viewBox="0 0 34 34.4" overflow="visible"><g fill="none" stroke="#3b3b3b" stroke-width="2.4"><line x1="0" y1="1.2" x2="34" y2="1.2"/><path d="M2.5 1.2 V21 H31.5 V1.2"/><line x1="8" y1="9" x2="26" y2="9"/><line x1="17" y1="21" x2="17" y2="33.2"/><line x1="6.5" y1="33.2" x2="27.5" y2="33.2"/></g></svg>
<text x="1516.97" y="59.70" font-family="Liberation Sans" font-size="26.5" font-weight="400" fill="#333333" textLength="121.02" lengthAdjust="spacingAndGlyphs" xml:space="preserve">Storyboard</text>
<rect x="1678.7" y="28.4" width="87.4" height="42.2" rx="21.1" fill="none" stroke="#8f8f8f" stroke-width="1.5"/>
<circle cx="1701.6" cy="49.5" r="14.8" fill="#8e8e8e"/>
<defs><linearGradient id="lg" x1="0" y1="0" x2="0" y2="1"><stop offset="0" stop-color="#f08a3c"/><stop offset="1" stop-color="#f5b090"/></linearGradient></defs><path d="M1704.5 41 L1696.5 51 H1701.5 L1699 61 L1707 49.5 H1702 Z" fill="url(#lg)"/>
<text x="1725.07" y="57.40" font-family="Liberation Sans" font-size="21" font-weight="400" fill="#9b9b9b" textLength="25.57" lengthAdjust="spacingAndGlyphs" xml:space="preserve">Off</text>
</svg>
<div id="panel"></div>
<div id="strip"></div>
<svg class="abs" width="2871" height="1610" viewBox="0 0 2871 1610">
<g fill="none" stroke="#6e6e6e" stroke-width="1.7"><line x1="2596.4" y1="7.5" x2="2596.4" y2="29.6"/><polyline points="2586.3,17.6 2596.4,7.4 2606.5,17.6"/><line x1="2637.4" y1="6" x2="2637.4" y2="28.4"/><polyline points="2627.3,18.4 2637.4,28.6 2647.5,18.4"/><path d="M2760.9 7.3 H2783.8 L2774.3 18.3 V26.6 H2770.4 V18.3 Z" stroke-linejoin="round"/><path d="M2812.5 9.9 H2803.6 V26.2 H2823.2 V17.8"/><path d="M2803.6 20.6 H2810.8 V26.2"/><line x1="2814" y1="19" x2="2823" y2="10"/><polyline points="2816.8,9.9 2823.2,9.9 2823.2,16.2"/></g>
<g fill="none" stroke="#c6c6c6" stroke-width="1.6"><line x1="2671.7" y1="6" x2="2671.7" y2="28.6"/><polyline points="2667.4,24.3 2671.7,28.8 2676,24.3"/><line x1="2683.6" y1="6" x2="2683.6" y2="28.6"/><polyline points="2679.3,24.3 2683.6,28.8 2687.9,24.3"/><path d="M2718.8 6 V17.6 H2712.6 V29 M2718.8 17.6 H2724.9 V29"/><polyline points="2708.6,25 2712.6,29.2 2716.6,25"/><polyline points="2720.9,25 2724.9,29.2 2728.9,25"/></g>
<circle cx="2843.7" cy="15.8" r="1.9" fill="#6e6e6e"/><circle cx="2854.6" cy="15.8" r="1.9" fill="#6e6e6e"/>
<text x="2177.70" y="92.00" font-family="Liberation Sans" font-size="49" font-weight="400" fill="#333333" textLength="174.54" lengthAdjust="spacingAndGlyphs" xml:space="preserve">Analytics</text>
<g stroke="#6e6e6e" stroke-width="2.2"><line x1="2811.5" y1="70.6" x2="2835.3" y2="94"/><line x1="2835.3" y1="70.6" x2="2811.5" y2="94"/></g>
<rect x="2142" y="113.8" width="720" height="1.6" fill="#e2e2e2" />
<rect x="2169.65" y="140.65" width="699.5" height="96.25" fill="none" stroke="#e41f1f" stroke-width="3.7"/>
<text x="2175.61" y="197.00" font-family="Liberation Sans" font-size="26.5" font-weight="400" fill="#333333" stroke="#333333" stroke-width="0.74" textLength="73.86" lengthAdjust="spacingAndGlyphs" xml:space="preserve">Name</text>
<rect x="2458.75" y="151.25" width="392.50" height="69.00" rx="0" fill="#ffffff" stroke="#d8d8d8" stroke-width="1.5"/>
<text x="2491.61" y="196.00" font-family="Liberation Sans" font-size="26.5" font-weight="400" fill="#333333" textLength="145.06" lengthAdjust="spacingAndGlyphs" xml:space="preserve">Project Start</text>
<text x="2175.70" y="301.40" font-family="Liberation Sans" font-size="26.5" font-weight="400" fill="#333333" stroke="#333333" stroke-width="0.74" textLength="86.93" lengthAdjust="spacingAndGlyphs" xml:space="preserve">Date(s)</text>
<rect x="2458.75" y="256.25" width="392.50" height="69.30" rx="0" fill="#ffffff" stroke="#d8d8d8" stroke-width="1.5"/>
<text x="2477.90" y="301.40" font-family="Liberation Sans" font-size="26.5" font-weight="400" fill="#333333" textLength="142.48" lengthAdjust="spacingAndGlyphs" xml:space="preserve">first-of-date</text>
<polyline points="2811.20,285.90 2821.60,296.30 2832.00,285.90" fill="none" stroke="#2b2b2b" stroke-width="3.5"/>
<text x="2175.35" y="407.80" font-family="Liberation Sans" font-size="26.5" font-weight="400" fill="#333333" stroke="#333333" stroke-width="0.74" textLength="51.41" lengthAdjust="spacingAndGlyphs" xml:space="preserve">Line</text>
<rect x="2457.60" y="376.00" width="67.00" height="36.60" rx="18.30" fill="#0078d4"/><circle cx="2503.70" cy="394.30" r="11.35" fill="#f0f0f0"/>
<text x="2211.49" y="512.70" font-family="Liberation Sans" font-size="26.5" font-weight="400" fill="#333333" textLength="84.37" lengthAdjust="spacingAndGlyphs" xml:space="preserve">Format</text>
<rect x="2458.35" y="467.75" width="146.50" height="69.50" rx="0" fill="#ffffff" stroke="#d8d8d8" stroke-width="1.5"/>
<rect x="2477" y="501.9" width="77.8" height="2.2" fill="#2b2b2b" />
<polyline points="2567.00,497.70 2576.90,508.10 2586.80,497.70" fill="none" stroke="#2b2b2b" stroke-width="3.3"/>
<rect x="2618.75" y="467.75" width="146.50" height="69.50" rx="0" fill="#ffffff" stroke="#d8d8d8" stroke-width="1.5"/>
<text x="2677.27" y="512.50" font-family="Liberation Sans" font-size="26.5" font-weight="400" fill="#333333" textLength="11.30" lengthAdjust="spacingAndGlyphs" xml:space="preserve">1</text>
<text x="2702.74" y="512.50" font-family="Liberation Sans" font-size="26.5" font-weight="400" fill="#333333" textLength="27.01" lengthAdjust="spacingAndGlyphs" xml:space="preserve">px</text>
<rect x="2778.25" y="467.75" width="69.50" height="69.50" rx="0" fill="#ffffff" stroke="#d8d8d8" stroke-width="1.5"/>
<rect x="2790" y="480" width="45.4" height="45" rx="4" fill="#e36a36"/>
<text x="2175.39" y="619.80" font-family="Liberation Sans" font-size="26.5" font-weight="400" fill="#333333" stroke="#333333" stroke-width="0.74" textLength="65.20" lengthAdjust="spacingAndGlyphs" xml:space="preserve">Label</text>
<rect x="2457.60" y="588.00" width="67.00" height="35.70" rx="17.85" fill="#0078d4"/><circle cx="2504.15" cy="605.85" r="11.07" fill="#f0f0f0"/>
<text x="2211.47" y="724.80" font-family="Liberation Sans" font-size="26.5" font-weight="400" fill="#333333" textLength="71.68" lengthAdjust="spacingAndGlyphs" xml:space="preserve">Name</text>
<rect x="2458.45" y="678.95" width="392.20" height="70.00" rx="0" fill="#ffffff" stroke="#d8d8d8" stroke-width="1.5"/>
<text x="2491.88" y="724.80" font-family="Liberation Sans" font-size="26.5" font-weight="400" fill="#333333" textLength="138.83" lengthAdjust="spacingAndGlyphs" xml:space="preserve">Reference 1</text>
<text x="2211.52" y="831.90" font-family="Liberation Sans" font-size="26.5" font-weight="400" fill="#333333" textLength="52.45" lengthAdjust="spacingAndGlyphs" xml:space="preserve">Font</text>
<rect x="2458.50" y="786.80" width="51.50" height="66.40" rx="0" fill="#ffffff" stroke="#4b8ff0" stroke-width="1.6"/>
<text x="2476.06" y="830.60" font-family="Liberation Sans" font-size="25" font-weight="700" fill="#000" textLength="16.93" lengthAdjust="spacingAndGlyphs" xml:space="preserve">B</text>
<g stroke="#222" stroke-width="1.8" fill="none"><line x1="2554.5" y1="812.6" x2="2548" y2="830.4"/><line x1="2550" y1="812.6" x2="2559" y2="812.6"/><line x1="2543.5" y1="830.4" x2="2552.5" y2="830.4"/></g>
<rect x="2574.2" y="802" width="1.4" height="40" fill="#dedede" />
<rect x="2589.25" y="785.75" width="69.00" height="69.90" rx="0" fill="#ffffff" stroke="#d8d8d8" stroke-width="1.5"/>
<rect x="2601" y="797.4" width="45.6" height="46.6" rx="5" fill="#000000"/>
<rect x="2673.15" y="785.75" width="177.50" height="69.90" rx="0" fill="#ffffff" stroke="#d8d8d8" stroke-width="1.5"/>
<text x="2746.38" y="831.90" font-family="Liberation Sans" font-size="26.5" font-weight="400" fill="#333333" textLength="29.76" lengthAdjust="spacingAndGlyphs" xml:space="preserve">12</text>
<text x="2787.72" y="831.90" font-family="Liberation Sans" font-size="26.5" font-weight="400" fill="#333333" textLength="27.32" lengthAdjust="spacingAndGlyphs" xml:space="preserve">px</text>
<text x="2211.48" y="936.50" font-family="Liberation Sans" font-size="26.5" font-weight="400" fill="#333333" textLength="143.17" lengthAdjust="spacingAndGlyphs" xml:space="preserve">Background</text>
<rect x="2457.70" y="906.60" width="67.30" height="36.20" rx="18.10" fill="#0078d4"/><circle cx="2504.30" cy="924.70" r="11.22" fill="#f0f0f0"/>
<rect x="2548.75" y="891.65" width="69.30" height="69.10" rx="0" fill="#ffffff" stroke="#d8d8d8" stroke-width="1.5"/>
<rect x="2559" y="902.5" width="48" height="47.3" rx="5" fill="#e3e6e6"/>
<text x="2457.70" y="1043.70" font-family="Liberation Sans" font-size="26.5" font-weight="400" fill="#505050" textLength="119.06" lengthAdjust="spacingAndGlyphs" xml:space="preserve">X position</text>
<text x="2666.00" y="1043.70" font-family="Liberation Sans" font-size="26.5" font-weight="400" fill="#505050" textLength="118.45" lengthAdjust="spacingAndGlyphs" xml:space="preserve">Y position</text>
<text x="2212.49" y="1089.40" font-family="Liberation Sans" font-size="26.5" font-weight="400" fill="#333333" textLength="70.87" lengthAdjust="spacingAndGlyphs" xml:space="preserve">Offset</text>
<rect x="2458.45" y="1070.15" width="183.80" height="69.50" rx="0" fill="#ffffff" stroke="#d8d8d8" stroke-width="1.5"/>
<rect x="2666.75" y="1070.15" width="183.90" height="69.50" rx="0" fill="#ffffff" stroke="#d8d8d8" stroke-width="1.5"/>
<text x="2552.95" y="1115.00" font-family="Liberation Sans" font-size="26.5" font-weight="400" fill="#333333" textLength="15.53" lengthAdjust="spacingAndGlyphs" xml:space="preserve">9</text>
<text x="2579.19" y="1115.00" font-family="Liberation Sans" font-size="26.5" font-weight="400" fill="#333333" textLength="28.26" lengthAdjust="spacingAndGlyphs" xml:space="preserve">px</text>
<text x="2760.97" y="1115.00" font-family="Liberation Sans" font-size="26.5" font-weight="400" fill="#333333" textLength="15.19" lengthAdjust="spacingAndGlyphs" xml:space="preserve">0</text>
<text x="2787.72" y="1115.00" font-family="Liberation Sans" font-size="26.5" font-weight="400" fill="#333333" textLength="27.32" lengthAdjust="spacingAndGlyphs" xml:space="preserve">px</text>
<text x="2211.46" y="1221.00" font-family="Liberation Sans" font-size="26.5" font-weight="400" fill="#333333" textLength="100.80" lengthAdjust="spacingAndGlyphs" xml:space="preserve">Rotation</text>
<rect x="2458.45" y="1175.25" width="135.50" height="69.00" rx="0" fill="#ffffff" stroke="#d8d8d8" stroke-width="1.5"/>
<text x="2507.80" y="1221.00" font-family="Liberation Sans" font-size="26.5" font-weight="400" fill="#333333" textLength="29.54" lengthAdjust="spacingAndGlyphs" xml:space="preserve">90</text>
<rect x="2598.3" y="1526.7" width="102.1" height="58.2" rx="4" fill="#f3f3f3"/>
<text x="2620.48" y="1566.40" font-family="Liberation Sans" font-size="26.5" font-weight="400" fill="#333333" stroke="#333333" stroke-width="0.74" textLength="56.50" lengthAdjust="spacingAndGlyphs" xml:space="preserve">Back</text>
<rect x="2723" y="1526.7" width="117" height="58.2" rx="4" fill="#0078d4"/>
<text x="2745.80" y="1566.40" font-family="Liberation Sans" font-size="26.5" font-weight="400" fill="#ffffff" stroke="#ffffff" stroke-width="0.74" textLength="71.00" lengthAdjust="spacingAndGlyphs" xml:space="preserve">Apply</text>
</svg>
</body></html>
